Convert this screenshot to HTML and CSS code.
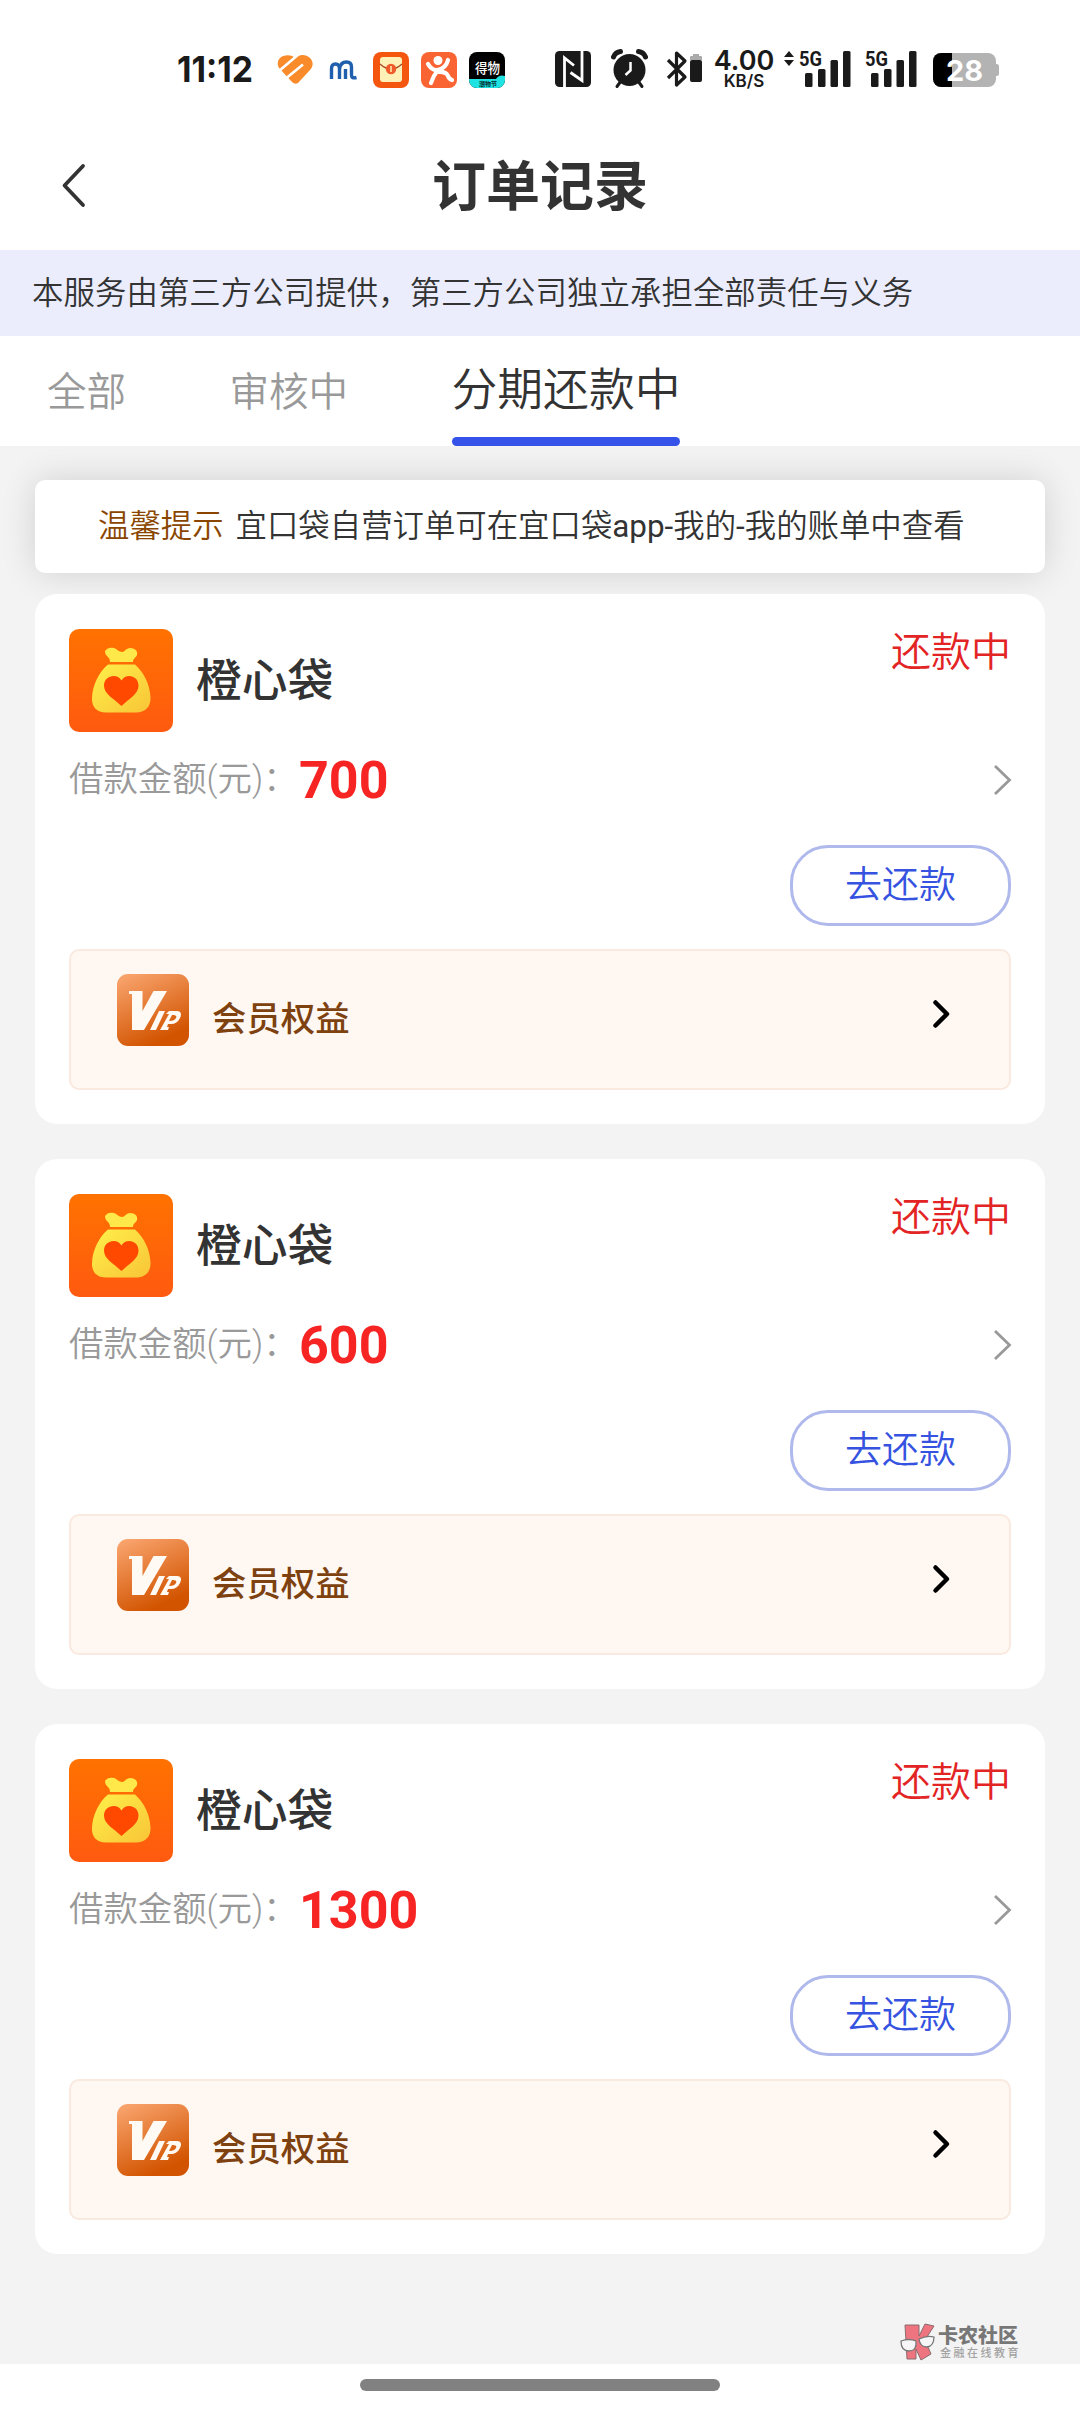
FILE: index.html
```html
<!DOCTYPE html>
<html lang="zh-CN">
<head>
<meta charset="utf-8">
<title>订单记录</title>
<link rel="stylesheet" href="styles.css">
</head>
<body>
<svg class="defs" width="0" height="0" aria-hidden="true">
  <defs>
    <linearGradient id="g-logo" x1="0" y1="0" x2="0" y2="1"><stop offset="0" stop-color="#ff7200"/><stop offset="1" stop-color="#ff5a10"/></linearGradient>
    <linearGradient id="g-bag" x1="0" y1="0" x2="1" y2="1"><stop offset="0" stop-color="#fff04a"/><stop offset="1" stop-color="#f8c437"/></linearGradient>
    <linearGradient id="g-vip" x1="0" y1="0" x2=".45" y2="1"><stop offset="0" stop-color="#fba873"/><stop offset="1" stop-color="#d25400"/></linearGradient>
  </defs>
  <symbol id="logo" viewBox="0 0 104 103">
    <rect width="104" height="103" rx="10" fill="url(#g-logo)"/>
    <path d="M36 22c2-3 5-4 9-3 3 1 5 4 8 4s4-4 8-4c5 0 8 3 7 7-1 3-4 3-4 7H41c0-6-5-5-5-11z" fill="#ffe94a"/>
    <path d="M39 35.500h27c9 8 15 20 15.500 33C82 78 76 83.500 67 83.500H37C28 83.500 22.500 78 23 69c.5-13 7-26 16-33.500z" fill="url(#g-bag)"/>
    <path d="M52.500 77C44 69 35 65 35 56.500c0-10 13-13 17.500-5 4.500-8 17-5 17 5C69.500 65 61 69 52.500 77z" fill="#ff4800"/>
  </symbol>
  <symbol id="vip" viewBox="0 0 72 72">
    <rect width="72" height="72" rx="11" fill="url(#g-vip)"/>
    <path d="M12 17h13.500v20l11-20H50L27 56H15V20h-3z" fill="#fffaf3"/>
    <path d="M42 37h6l-9 19h-6zM52 37h8c4 0 5 3 3 7s-5 6-9 6h-3l-1 3h2l-1 3h-8l9-16h-3zm3 4l-3 6c4 0 6-1 7-3s0-3-4-3z" fill="#fffaf3" fill-rule="evenodd"/>
  </symbol>
  <symbol id="next" viewBox="0 0 20 32"><path d="M2 2l14.500 14L2 30" fill="none" stroke="#999" stroke-width="2.800"/></symbol>
  <symbol id="next-bold" viewBox="0 0 20 30"><path d="M3.500 3.500L15 15 3.500 26.500" fill="none" stroke="#000" stroke-width="4.500" stroke-linecap="round" stroke-linejoin="round"/></symbol>
</svg>

<div class="status-bar">
  <svg class="time" width="80" height="44" viewBox="176 47 80 44"><text x="177" y="82" class="clock" textLength="76" lengthAdjust="spacingAndGlyphs">11:12</text></svg>
  <svg class="ic-heart" width="36" height="44" viewBox="277 47 36 44"><path d="M295 58c4-4 11-4 15 0s3 9 0 12l-12 13q-3 2-6-1l-12-13c-3-3-3-8 0-11s11-4 15 0z" fill="#f98b2b"/><path d="M299 54L279 71M303 64.500L284 80" stroke="#fff" stroke-width="2.600" fill="none"/></svg>
  <svg class="ic-m" width="30" height="44" viewBox="329 47 30 44"><path d="M331.500 79V69q0-5 4-5t4 5v10M339.500 69q1-7 7-7 5 0 5 5v8q0 4 5 2.500M345.500 69v10" fill="none" stroke="#1f5fae" stroke-width="3.400"/></svg>
  <svg class="ic-envelope" width="36" height="44" viewBox="373 47 36 44"><rect x="373" y="52" width="36" height="36" rx="8" fill="#f4560f"/><rect x="380" y="57" width="22" height="25" rx="3" fill="#fff0b8"/><path d="M380 64q11 10 22 0" fill="none" stroke="#a84a24" stroke-width="1.300"/><circle cx="391" cy="69" r="5.200" fill="#f0592a"/><path d="M391 66v6" stroke="#ffe9a8" stroke-width="1.600"/></svg>
  <svg class="ic-person" width="36" height="44" viewBox="421 47 36 44"><rect x="421" y="52" width="36" height="36" rx="8" fill="#fa6433"/><circle cx="438" cy="60.500" r="4.500" fill="#fff"/><path d="M428 64q4 7 10 6 8-2 10-10M438 70q-5 6-7 13M437 72q9-1 11 4 1 3 4 4" fill="none" stroke="#fff" stroke-width="4.200" stroke-linecap="round"/></svg>
  <svg class="ic-dewu" width="36" height="44" viewBox="469 47 36 44"><clipPath id="dw"><rect x="469" y="52" width="36" height="36" rx="8"/></clipPath><g clip-path="url(#dw)"><rect x="469" y="52" width="36" height="36"/><path d="M469 79h27q3-5 9-3v13h-36z" fill="#1fe3e2"/></g><text x="475" y="73" class="dw-big" textLength="25" lengthAdjust="spacingAndGlyphs">得物</text><text x="479" y="86" class="dw-small">潮物节</text></svg>
  <svg class="ic-nfc" width="36" height="44" viewBox="555 47 36 44"><rect x="555" y="51" width="36" height="36" rx="4.500" fill="#1a1a1a"/><path d="M564.500 87V58l9.500 7.500M570.500 72.500l11.500 8V51" fill="none" stroke="#fff" stroke-width="2.800"/></svg>
  <svg class="ic-alarm" width="38" height="44" viewBox="611 47 38 44"><circle cx="629.500" cy="70" r="16" fill="#1a1a1a"/><path d="M613.500 57q2-5 7-5.500M645.500 57q-2-5-7-5.500" stroke="#1a1a1a" stroke-width="5" stroke-linecap="round" fill="none"/><path d="M621 81l-4 5.500M638 81l4 5.500" stroke="#1a1a1a" stroke-width="3" stroke-linecap="round"/><path d="M630.500 62v8.500l-5 4.500" stroke="#fff" stroke-width="2.500" fill="none"/></svg>
  <svg class="ic-bt" width="38" height="44" viewBox="665 47 38 44"><path d="M668 60l17 17-8.500 8V53l8.500 8-17 17" fill="none" stroke="#1a1a1a" stroke-width="3.200" stroke-linejoin="round"/><path d="M690 60v-3q0-1 1-1h2v-2h6v2h2q1 0 1 1v3z" fill="#aaa"/><rect x="690" y="60" width="12" height="22" rx="2" fill="#1a1a1a"/></svg>
  <div class="speed"><span class="speed-num">4.00</span><span class="speed-unit">KB/S</span></div>
  <svg class="ic-sig1" width="68" height="44" viewBox="784 47 68 44"><path d="M784 57l5-6 5 6zM784 60l5 6 5-6z" fill="#1a1a1a"/><text x="799" y="66" class="g5" textLength="23" lengthAdjust="spacingAndGlyphs">5G</text><g fill="#1a1a1a"><rect x="805" y="73" width="7.500" height="14" rx="1.500"/><rect x="818" y="69" width="7.500" height="18" rx="1.500"/><rect x="830.500" y="60" width="7.500" height="27" rx="1.500"/><rect x="843" y="51" width="7.500" height="36" rx="1.500"/></g></svg>
  <svg class="ic-sig2" width="53" height="44" viewBox="865 47 53 44"><text x="865" y="66" class="g5" textLength="23" lengthAdjust="spacingAndGlyphs">5G</text><g fill="#1a1a1a"><rect x="871" y="73" width="7.500" height="14" rx="1.500"/><rect x="884" y="69" width="7.500" height="18" rx="1.500"/><rect x="896.500" y="60" width="7.500" height="27" rx="1.500"/><rect x="909" y="51" width="7.500" height="36" rx="1.500"/></g></svg>
  <svg class="ic-batt" width="66" height="44" viewBox="933 47 66 44"><clipPath id="bt"><rect x="933" y="53" width="63" height="34" rx="8"/></clipPath><rect x="992" y="64" width="7" height="12" rx="2.500" fill="#b3b3b3"/><g clip-path="url(#bt)"><rect x="933" y="53" width="63" height="34" fill="#b3b3b3"/><rect x="933" y="53" width="19" height="34"/></g><text x="946" y="81" class="batt" textLength="37" lengthAdjust="spacingAndGlyphs">28</text></svg>
</div>

<header class="nav">
  <svg class="back" width="26" height="44" viewBox="0 0 26 44"><path d="M22 3L3.500 22.500 22 42" fill="none" stroke="#333" stroke-width="3.800" stroke-linecap="round" stroke-linejoin="round"/></svg>
  <h1 class="title">订单记录</h1>
</header>
<div class="disclaimer">本服务由第三方公司提供，第三方公司独立承担全部责任与义务</div>
<nav class="tabs">
  <span class="tab">全部</span>
  <span class="tab">审核中</span>
  <span class="tab tab-active">分期还款中</span>
</nav>

<main class="list">
  <div class="tip"><span class="tip-label">温馨提示</span><span>宜口袋自营订单可在宜口袋<span class="latin">app-</span>我的<span class="latin">-</span>我的账单中查看</span></div>

  <article class="card">
    <div class="head"><svg class="logo"><use href="#logo"/></svg><h2 class="name">橙心袋</h2><span class="state">还款中</span></div>
    <div class="amount"><span class="label">借款金额(元)：</span><b class="value">700</b><svg class="next"><use href="#next"/></svg></div>
    <button class="repay">去还款</button>
    <div class="benefit"><svg class="vip"><use href="#vip"/></svg><span class="benefit-name">会员权益</span><svg class="next-bold"><use href="#next-bold"/></svg></div>
  </article>

  <article class="card">
    <div class="head"><svg class="logo"><use href="#logo"/></svg><h2 class="name">橙心袋</h2><span class="state">还款中</span></div>
    <div class="amount"><span class="label">借款金额(元)：</span><b class="value">600</b><svg class="next"><use href="#next"/></svg></div>
    <button class="repay">去还款</button>
    <div class="benefit"><svg class="vip"><use href="#vip"/></svg><span class="benefit-name">会员权益</span><svg class="next-bold"><use href="#next-bold"/></svg></div>
  </article>

  <article class="card">
    <div class="head"><svg class="logo"><use href="#logo"/></svg><h2 class="name">橙心袋</h2><span class="state">还款中</span></div>
    <div class="amount"><span class="label">借款金额(元)：</span><b class="value">1300</b><svg class="next"><use href="#next"/></svg></div>
    <button class="repay">去还款</button>
    <div class="benefit"><svg class="vip"><use href="#vip"/></svg><span class="benefit-name">会员权益</span><svg class="next-bold"><use href="#next-bold"/></svg></div>
  </article>

  <div class="watermark">
    <svg width="36" height="38" viewBox="0 0 36 38"><path d="M5 2h14v11l6-12 9 2-9 14 6 14-10 6-5-11v10H7z" fill="#ee7480" stroke="#8a6a6c" stroke-width="1"/><path d="M1 18q8-3 15 0 1 10-7 10T1 18zM19 16q8-4 15-2 0 9-7 10-7 0-8-8z" fill="#f6f6f6" stroke="#777" stroke-width="1.300"/></svg>
    <div class="wm-text"><span class="wm-name">卡农社区</span><span class="wm-sub">金融在线教育</span></div>
  </div>
</main>
<footer class="home"><span class="home-bar"></span></footer>
</body>
</html>
```
FILE: styles.css
```css
* { box-sizing: border-box; }
body {
  margin: 0;
  width: 1080px;
  height: 2412px;
  display: flex;
  flex-direction: column;
  background: #fff;
  color: #333;
  font-family: Roboto, "Noto Sans CJK SC", sans-serif;
  font-weight: 350;
}
.defs { position: absolute; }
h1, h2 { margin: 0; }
svg { display: block; flex: none; overflow: visible; }

.status-bar { height: 140px; padding: 47px 0 0 176px; display: flex; align-items: flex-start; }
.clock { font: 700 36px Inter, sans-serif; fill: #1a1a1a; }
.ic-heart { margin-left: 21px; }
.ic-m { margin-left: 16px; }
.ic-envelope { margin-left: 14px; }
.ic-person, .ic-dewu { margin-left: 12px; }
.dw-big { font: 500 14px "Noto Sans CJK SC", sans-serif; fill: #fff; }
.dw-small { font: 700 6px "Noto Sans CJK SC", sans-serif; fill: #033; }
.ic-nfc { margin-left: 50px; }
.ic-alarm { margin-left: 20px; }
.ic-bt { margin-left: 16px; }
.speed { width: 62px; margin: 0 0 0 10px; display: flex; flex-direction: column; align-items: center; color: #1a1a1a; font-family: Inter, sans-serif; }
.speed-num { font-size: 27px; font-weight: 600; line-height: 27px; }
.speed-unit { font-size: 17px; font-weight: 600; line-height: 14px; }
.ic-sig1 { margin-left: 9px; }
.g5 { font: 700 21px Roboto, sans-serif; fill: #1a1a1a; }
.ic-sig2 { margin-left: 13px; }
.ic-batt { margin-left: 15px; }
.batt { font: 700 29px Inter, sans-serif; fill: #fff; }

.nav { height: 110px; padding: 0 61px; display: grid; grid-template-columns: 26px 1fr 26px; align-items: start; }
.back { margin-top: 23px; }
.title { padding-top: 2px; text-align: center; font-size: 54px; line-height: 92px; font-weight: 700; }
.disclaimer { height: 86px; padding-left: 32px; background: #ebedfd; font-size: 31.4px; line-height: 88px; letter-spacing: .08px; white-space: nowrap; }
.tabs { height: 110px; padding-left: 47px; display: flex; }
.tab { height: 110px; font-size: 39.5px; line-height: 113px; color: #999; margin-right: 103.5px; }
.tab-active { font-size: 45.8px; line-height: 110px; color: #333; position: relative; }
.tab-active::after { content: ""; position: absolute; left: 0; right: 0; bottom: 0; height: 9px; border-radius: 4.5px; background: #3553e8; }

.list { height: 1918px; padding: 34px 35px 0; background: #f3f3f3; }
.tip { height: 93px; margin-bottom: 21px; padding-left: 63px; display: flex; gap: 12px; border-radius: 10px; background: #fff; box-shadow: 0 0 35px rgba(0, 0, 0, .14); font-size: 31.4px; line-height: 93px; white-space: nowrap; }
.tip-label { color: #8a4600; }
.latin { font-weight: 400; }

.card { position: relative; height: 530px; margin-bottom: 35px; padding: 35px 34px 34px; display: flex; flex-direction: column; border-radius: 22px; background: #fff; }
.head { height: 103px; display: flex; }
.logo { width: 104px; height: 103px; }
.name { margin-left: 23px; font-size: 45.8px; line-height: 105px; font-weight: 500; }
.state { margin-left: auto; font-size: 40px; line-height: 48px; color: #e32424; }
.amount { height: 94px; display: flex; align-items: center; }
.label { width: 230px; padding-top: 1px; font-size: 34.4px; line-height: 93px; color: #999; white-space: nowrap; }
.value { padding-top: 2px; font-size: 52px; line-height: 91px; color: #f72424; }
.next { width: 20px; height: 32px; margin: 2px -2px 0 auto; }
.repay { align-self: flex-end; width: 221px; height: 81px; margin-top: 19px; padding: 0; border: 3px solid #b0b9ec; border-radius: 38px; background: #fff; color: #3553e0; font-family: inherit; font-weight: inherit; font-size: 37px; line-height: 75px; }
.benefit { height: 141px; margin-top: 23px; padding: 23px 57px 0 46px; display: flex; border: 2px solid #fae9df; border-radius: 10px; background: #fff8f2; }
.vip { width: 72px; height: 72px; }
.benefit-name { margin-left: 23px; font-size: 34.4px; line-height: 90px; font-weight: 500; color: #7e4110; }
.next-bold { width: 20px; height: 30px; margin: 25px 0 0 auto; }

.watermark { display: flex; margin: 69px 0 0 865px; gap: 2px; }
.wm-text { display: flex; flex-direction: column; padding-top: 2px; white-space: nowrap; }
.wm-name { font-size: 20px; line-height: 22px; font-weight: 900; color: #777; }
.wm-sub { font-size: 11px; line-height: 13px; letter-spacing: 2.5px; font-weight: 500; color: #a2a2a2; margin-left: 2px; }

.home { height: 48px; display: flex; justify-content: center; padding-top: 15px; }
.home-bar { width: 360px; height: 12px; border-radius: 6px; background: #818181; }
```
